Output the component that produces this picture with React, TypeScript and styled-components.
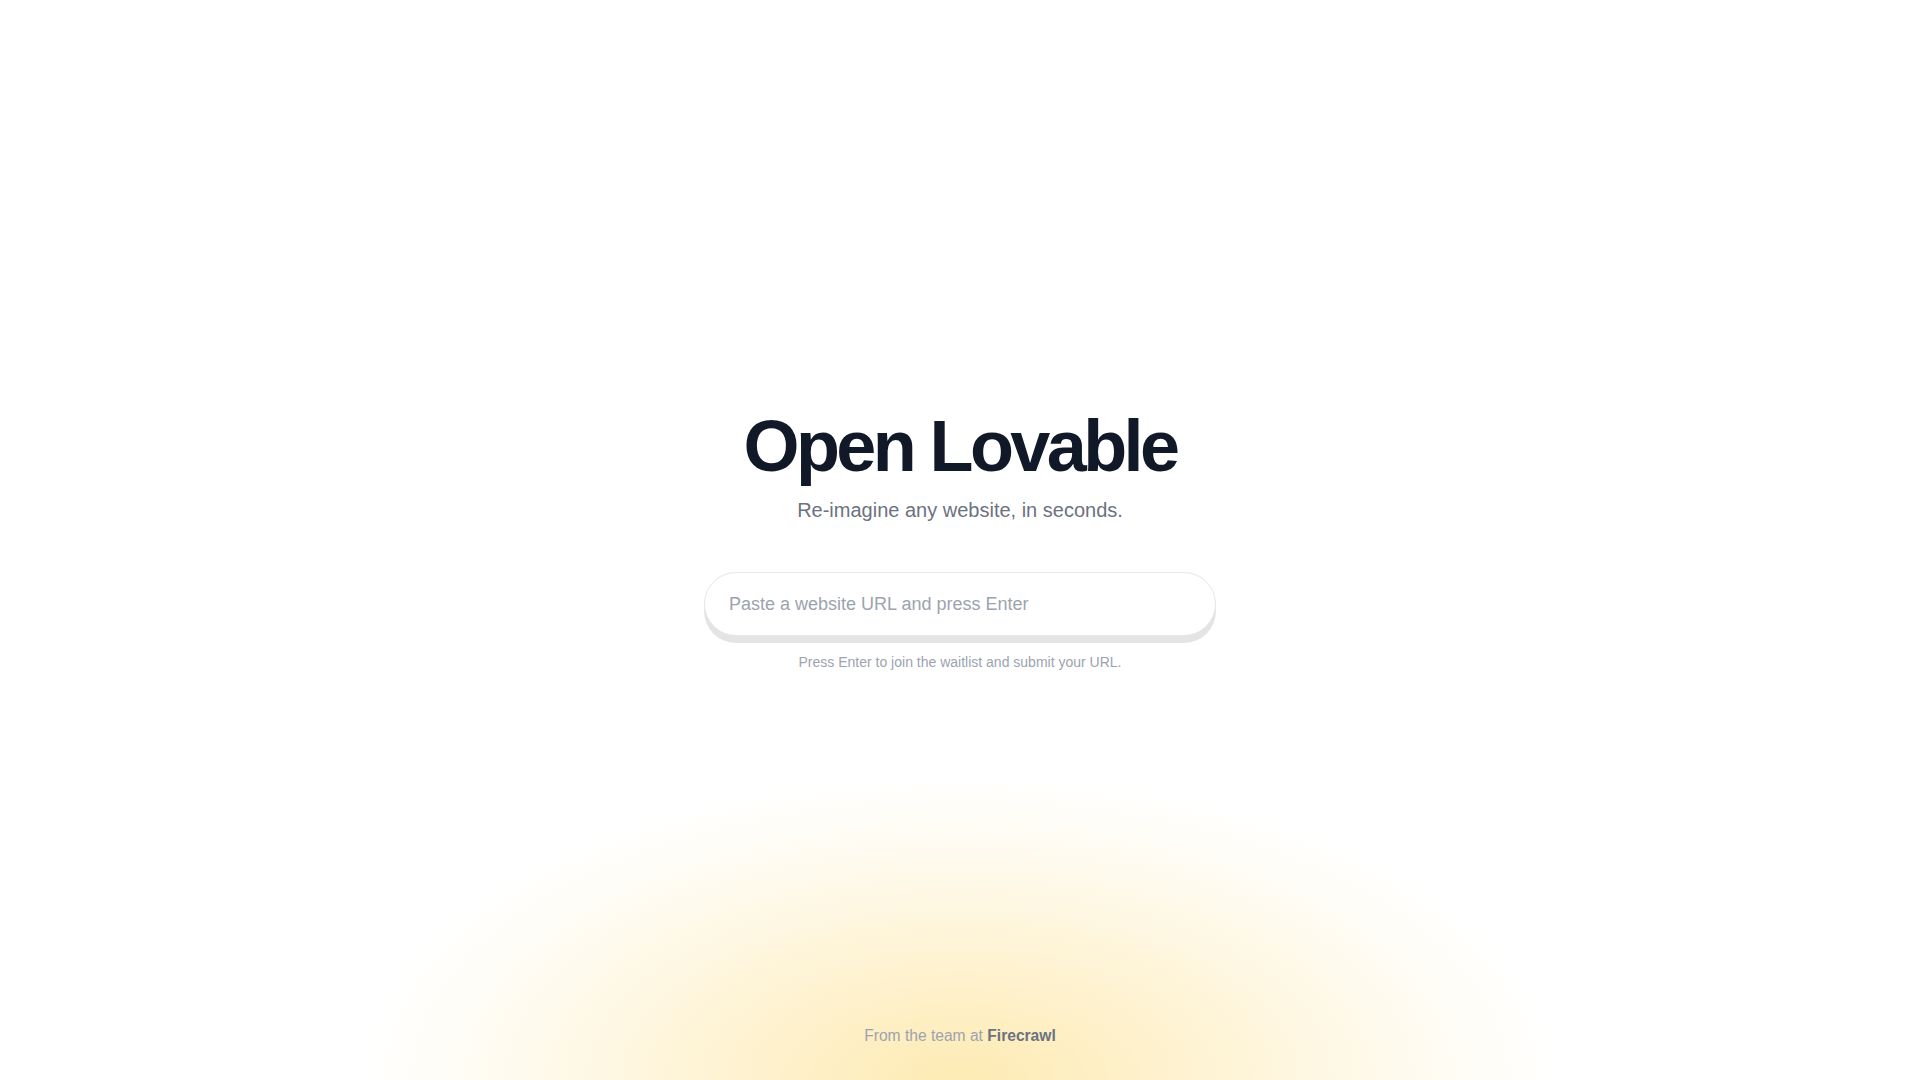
import React from "react";
import styled, { createGlobalStyle } from "styled-components";

const GlobalStyle = createGlobalStyle`
  html, body {
    margin: 0;
    padding: 0;
    background: #ffffff;
  }
  * { box-sizing: border-box; }
  body {
    font-family: "Liberation Sans", Arial, Helvetica, sans-serif;
    -webkit-font-smoothing: antialiased;
  }
`;

const Page = styled.div`
  min-height: 100vh;
  padding-top: 2px;
  display: grid;
  grid-template-rows: 1fr auto 1fr;
  justify-items: center;
  background:
    radial-gradient(
      ellipse 600px 305px at 50% 100%,
      #fdebb4 0%,
      #feefc4 22%,
      #fef3d4 42%,
      #fef8e6 64%,
      #fffcf4 82%,
      rgba(255, 255, 255, 0) 100%
    ),
    #ffffff;
`;

const Hero = styled.main`
  grid-row: 2;
  display: flex;
  flex-direction: column;
  align-items: center;
`;

const Title = styled.h1`
  margin: 0;
  font-size: 72px;
  line-height: 72px;
  font-weight: 700;
  letter-spacing: -0.05em;
  color: #111827;
`;

const Subtitle = styled.p`
  margin: 14px 0 0;
  font-size: 20px;
  line-height: 28px;
  color: #6b7280;
`;

const UrlInput = styled.input`
  margin-top: 48px;
  width: 512px;
  height: 64px;
  padding: 0 24px;
  border: 1px solid #e5e7eb;
  border-radius: 9999px;
  background: #ffffff;
  box-shadow: 0 7px 0 0 #e4e4e4;
  font-family: inherit;
  font-size: 18px;
  color: #111827;
  outline: none;

  &::placeholder {
    color: #9ca3af;
  }
`;

const Hint = styled.p`
  margin: 16px 0 0;
  font-size: 14px;
  line-height: 20px;
  color: #9ca3af;
`;

const Footer = styled.footer`
  grid-row: 3;
  align-self: end;
  padding-bottom: 32px;
  font-size: 15.6px;
  line-height: 24px;
  color: #9ca3af;
`;

const Brand = styled.a`
  font-weight: 700;
  color: #6b7280;
  text-decoration: none;
`;

export default function App() {
  return (
    <>
      <GlobalStyle />
      <Page>
        <Hero>
          <Title>Open Lovable</Title>
          <Subtitle>Re-imagine any website, in seconds.</Subtitle>
          <UrlInput type="text" placeholder="Paste a website URL and press Enter" />
          <Hint>Press Enter to join the waitlist and submit your URL.</Hint>
        </Hero>
        <Footer>
          From the team at <Brand href="#">Firecrawl</Brand>
        </Footer>
      </Page>
    </>
  );
}
